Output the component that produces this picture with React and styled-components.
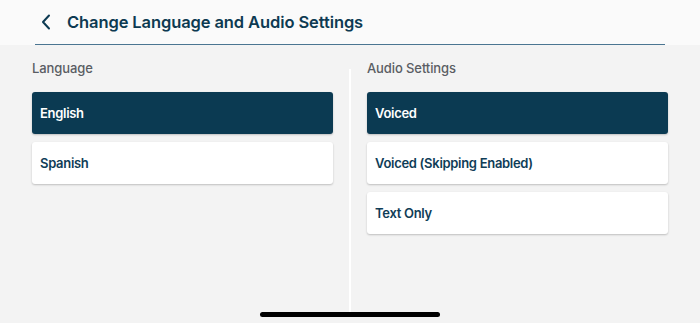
import styled, { createGlobalStyle } from "styled-components";

const GlobalStyle = createGlobalStyle`
  html, body {
    margin: 0;
    padding: 0;
    background: #f3f3f3;
    font-family: Inter, "Liberation Sans", sans-serif;
  }
`;

const Screen = styled.div`
  width: 700px;
  height: 323px;
  background: #f3f3f3;
  position: relative;
  overflow: hidden;
  display: flex;
  flex-direction: column;
`;

const Header = styled.header`
  background: #fafafa;
  height: 45px;
  padding: 0 35px;
  box-sizing: border-box;
`;

const HeaderInner = styled.div`
  height: 45px;
  box-sizing: border-box;
  border-bottom: 1.5px solid #4a7591;
  display: flex;
  align-items: center;
  gap: 16px;
  padding-left: 6px;
  padding-bottom: 1px;
`;

const BackButton = styled.button`
  border: none;
  background: none;
  padding: 0;
  display: flex;
  color: #0d3a52;
  cursor: pointer;
`;

const Title = styled.h1`
  margin: 0;
  font-size: 16.5px;
  font-weight: 600;
  color: #0d3a52;
  letter-spacing: -0.1px;
`;

const Columns = styled.div`
  flex: 1;
  display: grid;
  grid-template-columns: 1fr 2px 1fr;
  column-gap: 16px;
  padding: 0 32px;
`;

const Column = styled.section`
  display: flex;
  flex-direction: column;
  padding-top: 13px;
`;

const Divider = styled.div`
  background: #ffffff;
  margin-top: 24px;
  margin-bottom: 11px;
`;

const Label = styled.h2`
  margin: 0 0 14px 0;
  line-height: 20px;
  font-size: 13px;
  font-weight: 500;
  color: #5a5d63;
  letter-spacing: -0.1px;
`;

const Options = styled.div`
  display: flex;
  flex-direction: column;
  gap: 8px;
`;

const Option = styled.button`
  height: 42px;
  border: none;
  border-radius: 3px;
  padding: 0 8px;
  text-align: left;
  font-family: inherit;
  font-size: 13px;
  font-weight: 600;
  letter-spacing: -0.3px;
  background: ${({ $selected }) => ($selected ? "#0b3a52" : "#ffffff")};
  color: ${({ $selected }) => ($selected ? "#ffffff" : "#0f3d57")};
  box-shadow: 0 1px 2px rgba(0, 0, 0, 0.22);
  cursor: pointer;
`;

const HomeIndicator = styled.div`
  position: absolute;
  left: 260px;
  bottom: 6px;
  width: 180px;
  height: 5px;
  border-radius: 3px;
  background: #000;
`;

const languages = ["English", "Spanish"];
const audio = ["Voiced", "Voiced (Skipping Enabled)", "Text Only"];

export default function App() {
  return (
    <>
      <GlobalStyle />
      <Screen>
        <Header>
          <HeaderInner>
            <BackButton aria-label="Back">
              <svg width="10" height="16" viewBox="0 0 10 16" fill="none">
                <path d="M8 1.5L2 8l6 6.5" stroke="currentColor" strokeWidth="2" strokeLinecap="round" strokeLinejoin="round" />
              </svg>
            </BackButton>
            <Title>Change Language and Audio Settings</Title>
          </HeaderInner>
        </Header>
        <Columns>
          <Column>
            <Label>Language</Label>
            <Options>
              {languages.map((l, i) => (
                <Option key={l} $selected={i === 0}>{l}</Option>
              ))}
            </Options>
          </Column>
          <Divider />
          <Column>
            <Label>Audio Settings</Label>
            <Options>
              {audio.map((a, i) => (
                <Option key={a} $selected={i === 0}>{a}</Option>
              ))}
            </Options>
          </Column>
        </Columns>
        <HomeIndicator />
      </Screen>
    </>
  );
}
